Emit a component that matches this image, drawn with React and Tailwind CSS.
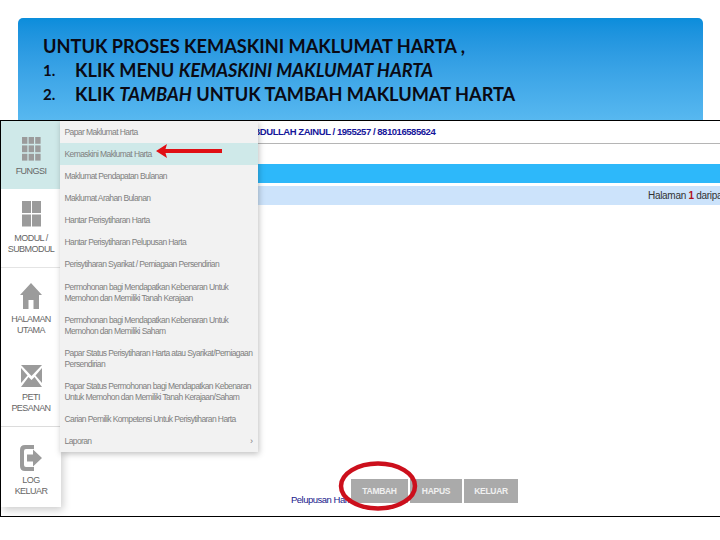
const menu = [
  { h: 22, lines: ["Papar Maklumat Harta"] },
  { h: 22, lines: ["Kemaskini Maklumat Harta"], active: true },
  { h: 22, lines: ["Maklumat Pendapatan Bulanan"] },
  { h: 22, lines: ["Maklumat Arahan Bulanan"] },
  { h: 22, lines: ["Hantar Perisytiharan Harta"] },
  { h: 22, lines: ["Hantar Perisytiharan Pelupusan Harta"] },
  { h: 23, lines: ["Perisytiharan Syarikat / Perniagaan Persendirian"] },
  { h: 33, lines: ["Permohonan bagi Mendapatkan Kebenaran Untuk", "Memohon dan Memiliki Tanah Kerajaan"] },
  { h: 33, lines: ["Permohonan bagi Mendapatkan Kebenaran Untuk", "Memohon dan Memiliki Saham"] },
  { h: 33, lines: ["Papar Status Perisytiharan Harta atau Syarikat/Perniagaan", "Persendirian"] },
  { h: 33, lines: ["Papar Status Permohonan bagi Mendapatkan Kebenaran", "Untuk Memohon dan Memiliki Tanah Kerajaan/Saham"] },
  { h: 22, lines: ["Carian Pemilik Kompetensi Untuk Perisytiharan Harta"] },
  { h: 22, lines: ["Laporan"], arrow: true },
];

function GridIcon() {
  const cells = [];
  for (let r = 0; r < 3; r++) for (let c = 0; c < 3; c++) cells.push(<rect key={r + "-" + c} x={c * 6.6} y={r * 8.4} width="5.4" height="6.8" />);
  return <svg width="19" height="24" viewBox="0 0 19 24" fill="#9b9b9b">{cells}</svg>;
}
function ModuleIcon() {
  return (
    <svg width="19" height="26" viewBox="0 0 19 26" fill="#9b9b9b">
      <rect x="0" y="0" width="9" height="12" />
      <rect x="10" y="0" width="9" height="12" />
      <rect x="0" y="13.5" width="9" height="12" />
      <rect x="10" y="13.5" width="9" height="12" />
    </svg>
  );
}
function HomeIcon() {
  return (
    <svg width="22" height="26" viewBox="0 0 22 26" fill="#9b9b9b">
      <path d="M11 0 L22 12 L19 12 L19 26 L13.5 26 L13.5 17 L8.5 17 L8.5 26 L3 26 L3 12 L0 12 Z" />
    </svg>
  );
}
function MailIcon() {
  return (
    <svg width="21" height="22" viewBox="0 0 21 22" fill="#9b9b9b">
      <path d="M0 0 H21 L10.5 11 Z" />
      <path d="M0 3 L6.5 10.5 L0 18 Z" />
      <path d="M21 3 L14.5 10.5 L21 18 Z" />
      <path d="M0 22 L7.5 12 L10.5 15 L13.5 12 L21 22 Z" />
    </svg>
  );
}
function LogoutIcon() {
  return (
    <svg width="22" height="26" viewBox="0 0 22 26" fill="#9b9b9b">
      <path d="M5 0 H14 V4 H6 Q4 4 4 6 V20 Q4 22 6 22 H14 V26 H5 Q0 26 0 21 V5 Q0 0 5 0 Z" />
      <path d="M7 9.5 H13 V4.5 L22 13 L13 21.5 V16.5 H7 Z" />
    </svg>
  );
}

function Side({ h, icon, lines, className = "" }) {
  return (
    <div className={"flex flex-col items-center justify-center text-center text-[9px] leading-[11px] tracking-[-0.55px] text-[#666] " + className} style={{ height: h }}>
      {icon}
      <div className="mt-[2px]">
        {lines.map((l) => <div key={l}>{l}</div>)}
      </div>
    </div>
  );
}

export default function App() {
  return (
    <div className="relative w-[720px] h-[540px] overflow-hidden bg-white pt-[18px] font-['Liberation_Sans',sans-serif]">
      <div className="ml-[18px] w-[685px] h-[102px] rounded-t-[5px] bg-gradient-to-b from-[#0a8ddb] to-[#57b8f0] pl-[25px] pt-[16px] font-['Lato',sans-serif] font-bold text-[18.2px] leading-[24px] text-[#0a0a14]">
        <div>UNTUK PROSES KEMASKINI MAKLUMAT HARTA ,</div>
        <div className="flex">
          <span className="w-[32px] text-[15px]">1.</span>
          <span>KLIK MENU <i>KEMASKINI MAKLUMAT HARTA</i></span>
        </div>
        <div className="flex">
          <span className="w-[32px] text-[15px]">2.</span>
          <span>KLIK <i>TAMBAH</i> UNTUK TAMBAH MAKLUMAT HARTA</span>
        </div>
      </div>

      <div className="relative flex h-[397px] overflow-hidden border-y-[1.5px] border-l-[1.5px] border-black bg-white">
        <div className="w-[60px] h-[386px] shrink-0 bg-white shadow-[2px_3px_8px_rgba(0,0,0,0.2)]">
          <Side h={68} className="bg-[#cfe9e9] pt-[3px] gap-[3px]" icon={<GridIcon />} lines={["FUNGSI"]} />
          <Side h={79} className="border-b border-[#e4e4e4] gap-[4px]" icon={<ModuleIcon />} lines={["MODUL /", "SUBMODUL"]} />
          <Side h={81} className="pt-[2px] gap-[3px]" icon={<HomeIcon />} lines={["HALAMAN", "UTAMA"]} />
          <Side h={78} className="border-b border-[#dcdcdc] pt-[4px] gap-[3px]" icon={<MailIcon />} lines={["PETI", "PESANAN"]} />
          <Side h={80} className="pt-[8px] gap-[2px]" icon={<LogoutIcon />} lines={["LOG", "KELUAR"]} />
        </div>

        <div className="flex-1 min-w-0 flex flex-col">
          <div className="h-[23px] shrink-0 border-b border-[#b5b5b5] pl-[186px] text-[9.5px] font-bold leading-[21px] text-[#16169a] whitespace-nowrap tracking-[-0.45px]">
            ABDULLAH ZAINUL / 1955257 / 881016585624
          </div>
          <div className="mt-[20px] h-[19px] shrink-0 bg-[#2db8fa]" />
          <div className="mt-[3px] h-[19px] shrink-0 bg-[#cce3fb] pl-[587px] text-[10px] leading-[19px] text-[#333] whitespace-nowrap tracking-[-0.3px]">
            Halaman <b className="text-[#b01020]">1</b> daripada
          </div>
          <div className="mt-auto mb-[13px] flex items-end pl-[230px]">
            <span className="w-[60px] shrink-0 text-[9.5px] leading-[11px] mb-[-2px] text-[#1a1a8c] whitespace-nowrap tracking-[-0.5px]">Pelupusan Harta</span>
            <div className="flex gap-[2px] text-[8.5px] font-bold text-[#f0f0f0] tracking-[-0.3px]">
              <div className="flex h-[24px] w-[57px] items-center justify-center bg-[#aaaaaa]">TAMBAH</div>
              <div className="flex h-[24px] w-[52px] items-center justify-center bg-[#aaaaaa]">HAPUS</div>
              <div className="flex h-[24px] w-[54px] items-center justify-center bg-[#aaaaaa]">KELUAR</div>
            </div>
          </div>
        </div>

        <div className="absolute left-[58.5px] top-0 w-[198px] bg-[#f2f2f2] shadow-[1px_2px_6px_rgba(0,0,0,0.25)] text-[8.5px] leading-[11px] tracking-[-0.6px] text-[#808080]">
          {menu.map((m) => (
            <div key={m.lines[0] + m.h} className={"flex items-center justify-between px-[5px] " + (m.active ? "bg-[#cfe9e9]" : "")} style={{ height: m.h }}>
              <div className="whitespace-nowrap">
                {m.lines.map((l) => <div key={l}>{l}</div>)}
              </div>
              {m.arrow && <span className="text-[9px]">›</span>}
            </div>
          ))}
        </div>
      </div>

      <svg className="absolute left-[154px] top-[143px]" width="70" height="18" viewBox="0 0 70 18">
        <path d="M2 8 L13 1 L11.5 6 L68 6 L68 10 L11.5 10 L13 15 Z" fill="#e01015" />
      </svg>
      <svg className="absolute left-[336px] top-[458px]" width="84" height="56" viewBox="0 0 84 56">
        <ellipse cx="42" cy="28" rx="37" ry="22.5" fill="none" stroke="#cc0f1c" strokeWidth="4.5" />
      </svg>
    </div>
  );
}
